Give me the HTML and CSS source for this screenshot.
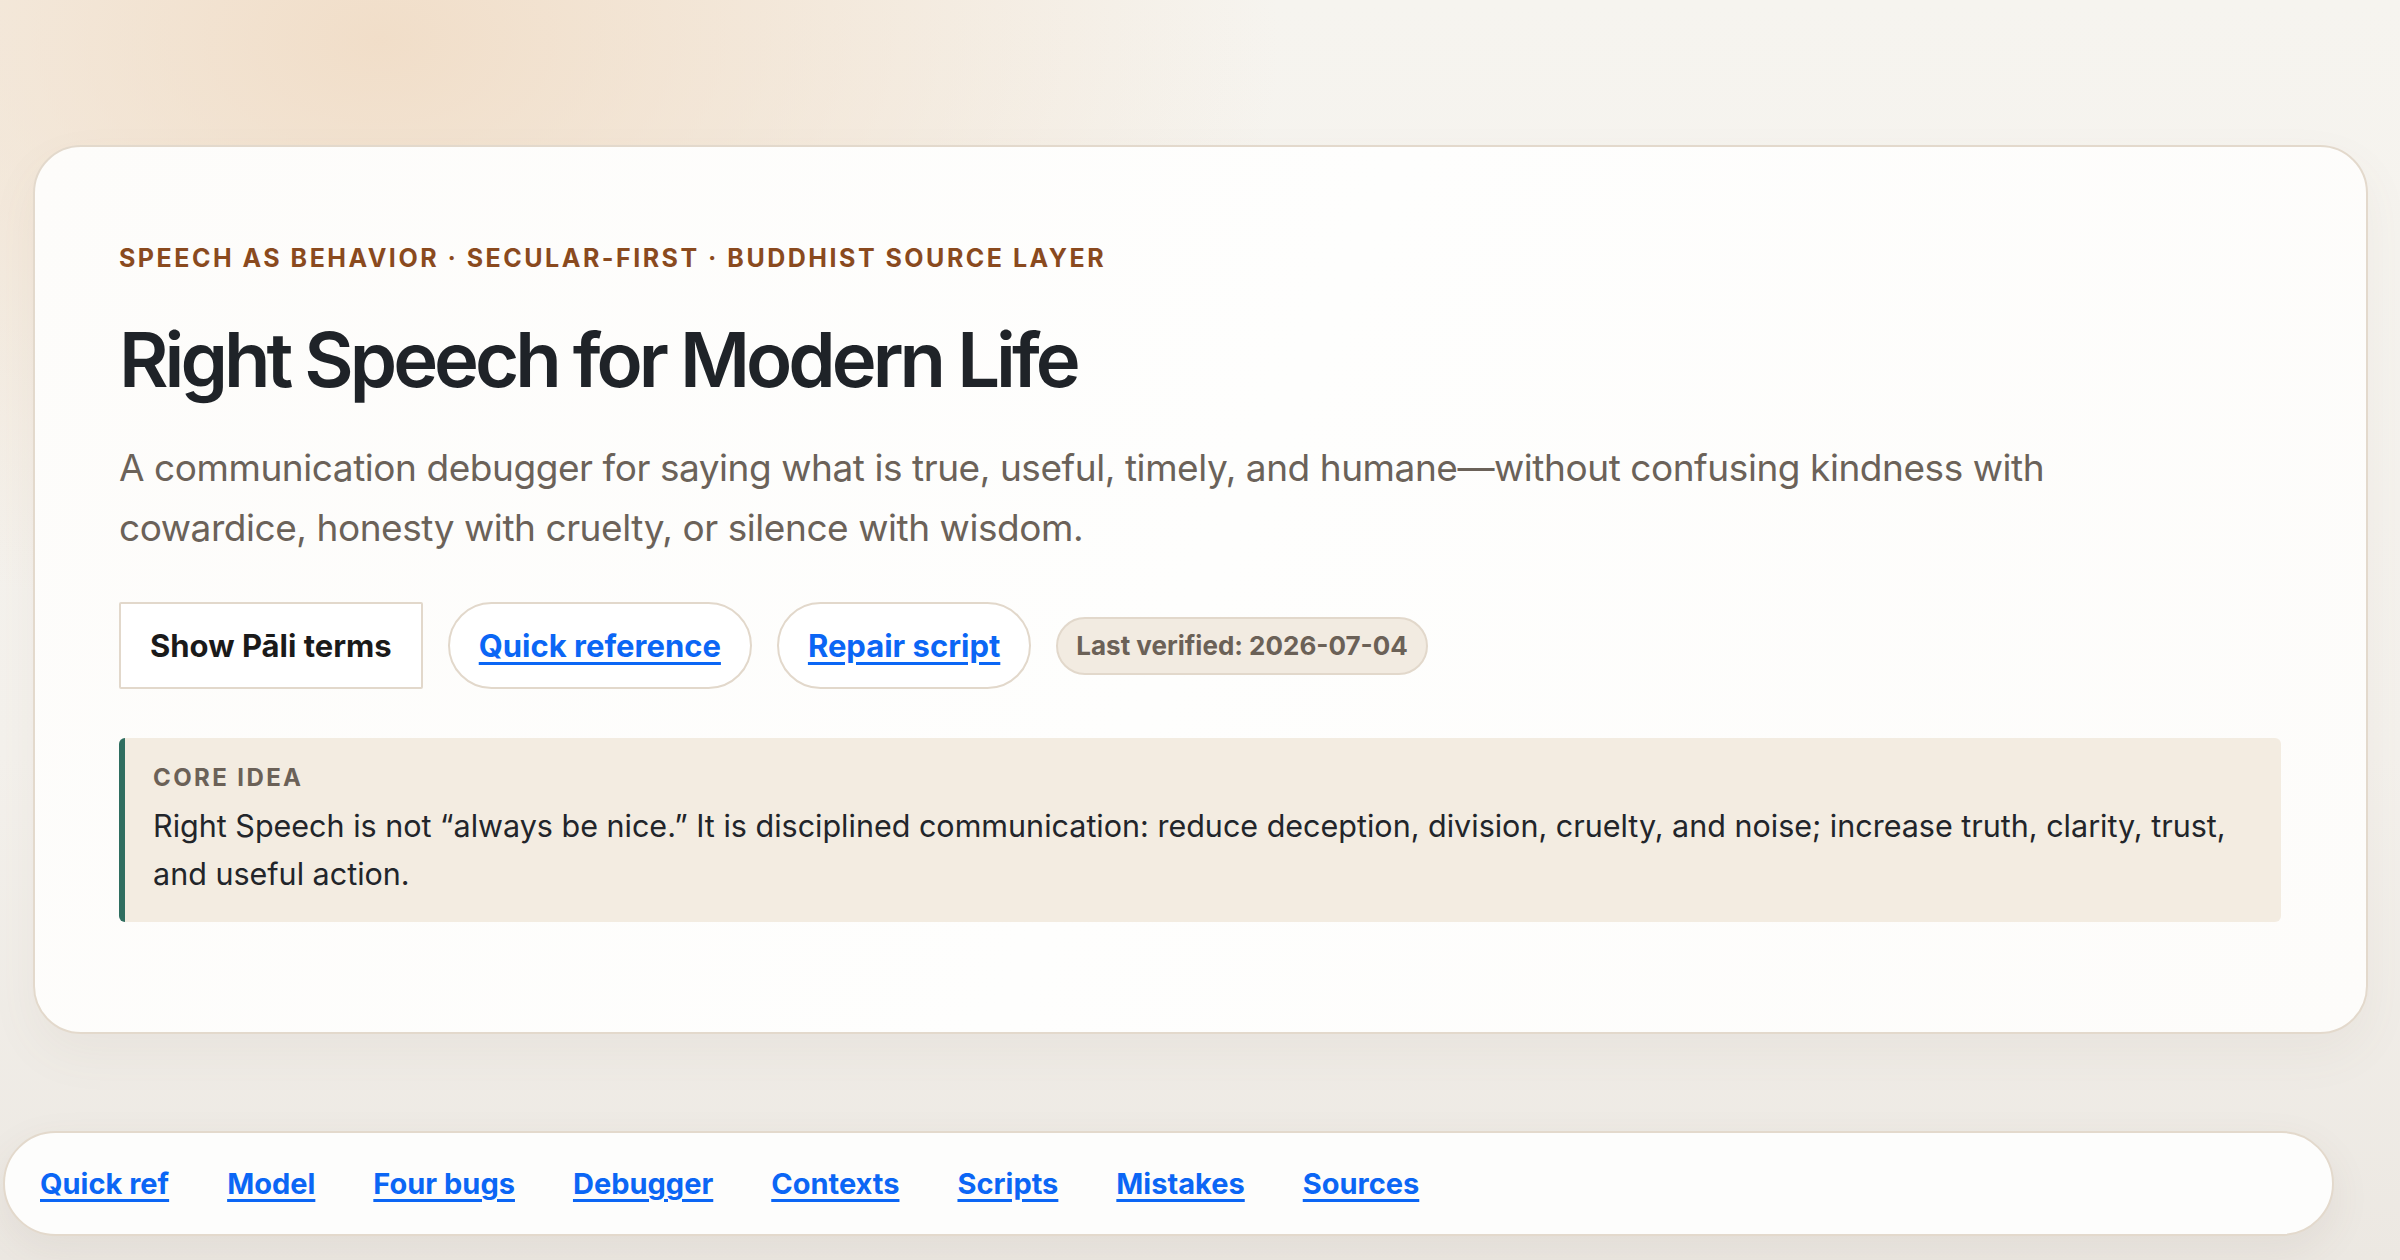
FILE: index.html
```html
<!DOCTYPE html>
<html lang="en">
<head>
  <meta charset="UTF-8">
  <title>Right Speech for Modern Life</title>
  <link rel="stylesheet" href="styles.css">
</head>
<body>

<!-- Hero -->
<div class="page">
  <header class="hero">
    <p class="eyebrow">Speech as behavior · Secular-first · Buddhist source layer</p>
    <h1>Right Speech for Modern Life</h1>
    <p class="lede">A communication debugger for saying what is true, useful, timely, and humane—without confusing kindness with cowardice, honesty with cruelty, or silence with wisdom.</p>

    <div class="actions">
      <button class="toggle" type="button">Show Pāli terms</button>
      <a class="pill" href="#quick-ref">Quick reference</a>
      <a class="pill" href="#scripts">Repair script</a>
      <span class="badge">Last verified: 2026-07-04</span>
    </div>

    <div class="core">
      <div class="core-label">Core idea</div>
      <p>Right Speech is not “always be nice.” It is disciplined communication: reduce deception, division, cruelty, and noise; increase truth, clarity, trust, and useful action.</p>
    </div>
  </header>
</div>

<!-- Section nav -->
<nav class="toc">
  <a href="#quick-ref">Quick ref</a>
  <a href="#model">Model</a>
  <a href="#bugs">Four bugs</a>
  <a href="#debugger">Debugger</a>
  <a href="#contexts">Contexts</a>
  <a href="#scripts">Scripts</a>
  <a href="#mistakes">Mistakes</a>
  <a href="#sources">Sources</a>
</nav>

</body>
</html>
```

FILE: styles.css
```css
* {
  box-sizing: border-box;
}
html, body {
  height: 100%;
}
body {
  margin: 0;
  font-family: Inter, "Noto Sans", sans-serif;
  color: #1f2328;
  background:
    radial-gradient(ellipse 900px 600px at 380px 40px, rgba(240, 218, 194, 0.85), rgba(240, 218, 194, 0) 100%),
    linear-gradient(180deg, #f6f4ef 0%, #f4f1ec 60%, #ece8e2 100%);
  overflow: hidden;
}
.page {
  padding: 145px 32px 0 33px;
}
.hero {
  background: linear-gradient(115deg, #fdfcfa 0%, #fefefd 50%, #fdfcfa 100%);
  border: 2px solid #e3d9cc;
  border-radius: 48px;
  padding: 96px 85px 110px 84px;
  box-shadow: 0 20px 50px rgba(120, 100, 80, 0.06);
}
.eyebrow {
  margin: 0;
  font-size: 25px;
  line-height: 30px;
  font-weight: 700;
  letter-spacing: 0.1em;
  text-transform: uppercase;
  color: #8a4a1e;
}
h1 {
  margin: 44px 0 0;
  font-size: 76px;
  line-height: 85px;
  font-weight: 600;
  letter-spacing: -0.053em;
  color: #1f2328;
}
.lede {
  max-width: 1960px;
  margin: 36px 0 0;
  font-size: 37px;
  line-height: 60px;
  letter-spacing: -0.012em;
  color: #6b6259;
}
.actions {
  display: flex;
  align-items: center;
  gap: 25px;
  margin-top: 44px;
}
.toggle {
  height: 87px;
  padding: 0 29px;
  background: #fff;
  border: 2px solid #e2d8cb;
  border-radius: 2px;
  font-family: inherit;
  font-size: 31px;
  font-weight: 700;
  color: #1a1a1a;
}
.pill {
  display: flex;
  align-items: center;
  height: 87px;
  padding: 0 29px;
  background: #fff;
  border: 2px solid #e2d8cb;
  border-radius: 999px;
  font-size: 31px;
  font-weight: 700;
  color: #0b66f5;
  text-decoration-thickness: 3px;
  text-underline-offset: 5px;
}
.badge {
  display: flex;
  align-items: center;
  height: 58px;
  padding: 0 18px;
  background: #f2ebe1;
  border: 2px solid #e2d8cb;
  border-radius: 999px;
  font-size: 26px;
  font-weight: 700;
  color: #6b6157;
}
.core {
  margin-top: 49px;
  padding: 26px 28px 24px 28px;
  background: #f3ece1;
  border-left: 6px solid #2f6e60;
  border-radius: 6px;
}
.core-label {
  font-size: 24px;
  line-height: 28px;
  font-weight: 700;
  letter-spacing: 0.1em;
  text-transform: uppercase;
  color: #6b6157;
}
.core p {
  margin: 10px 0 0;
  font-size: 30.5px;
  line-height: 48px;
  color: #22252a;
}
.toc {
  display: flex;
  align-items: center;
  gap: 58px;
  height: 105px;
  margin: 97px 66px 0 3px;
  padding: 0 35px;
  background: #fdfdfc;
  border: 2px solid #e3d9cc;
  border-radius: 999px;
  box-shadow: 0 14px 40px rgba(100, 80, 60, 0.08);
}
.toc a {
  font-size: 29px;
  font-weight: 700;
  color: #0b66f5;
  text-decoration-thickness: 3px;
  text-underline-offset: 5px;
}
```
